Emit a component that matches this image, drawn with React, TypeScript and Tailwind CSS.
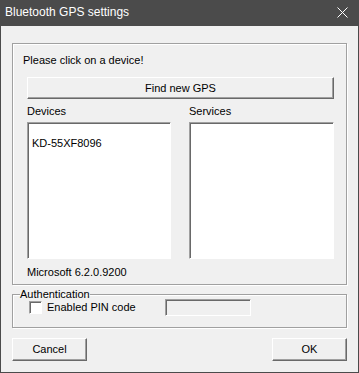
const raised =
  'border border-t-white border-l-white border-r-[#696969] border-b-[#696969] shadow-[inset_-1px_-1px_0_#a0a0a0] bg-[#f0f0f0]';
const sunken =
  'border border-t-[#a0a0a0] border-l-[#a0a0a0] border-r-white border-b-white shadow-[inset_1px_1px_0_#696969]';

export default function App() {
  return (
    <div className="w-[359px] h-[373px] flex flex-col bg-[#f0f0f0] border border-t-0 border-[#4b4b4b] text-[11px] leading-[13px] text-black font-['Liberation_Sans',Arial,sans-serif]">
      <div className="h-[26px] shrink-0 bg-[#4b4b4b] flex items-center justify-between pl-[4px] pr-[10px] text-white text-[12px]">
        <span className="pb-[1px]">Bluetooth GPS settings</span>
        <svg width="11" height="11" viewBox="0 0 11 11" className="mb-[1px]">
          <path d="M0.5 0.5 L10.5 10.5 M10.5 0.5 L0.5 10.5" stroke="#fff" strokeWidth="1" />
        </svg>
      </div>

      <div className="flex-1 flex flex-col px-[11px] pt-[17px]">
        <div className="h-[242px] border border-[#a0a0a0] shadow-[inset_1px_1px_0_#fff,1px_1px_0_#fff] flex flex-col pl-[10px] pr-[12px]">
          <p className="mt-[10px]">Please click on a device!</p>
          <button className={`${raised} ml-[4px] mt-[10px] h-[22px] flex items-center justify-center`}>
            Find new GPS
          </button>
          <div className="ml-[4px] mt-[6px] flex gap-[18px]">
            <div className="flex flex-col w-[144px]">
              <span>Devices</span>
              <div className={`${sunken} mt-[4px] h-[137px] bg-white px-[4px] pt-[14px]`}>KD-55XF8096</div>
            </div>
            <div className="flex flex-col flex-1">
              <span>Services</span>
              <div className={`${sunken} mt-[4px] h-[137px] bg-white`} />
            </div>
          </div>
          <p className="ml-[4px] mt-[7px]">Microsoft 6.2.0.9200</p>
        </div>

        <fieldset className="mt-[3px] h-[40px] border border-[#a0a0a0] shadow-[inset_1px_1px_0_#fff,1px_1px_0_#fff] pl-[7px] flex items-center">
          <legend className="px-0 leading-[13px]">Authentication</legend>
          <div className="flex items-center pl-[9px] -mt-[2px]">
            <span className={`${sunken} w-[13px] h-[13px] bg-white`} />
            <span className="ml-[5px]">Enabled PIN code</span>
            <span className={`${sunken} ml-[29px] w-[86px] h-[17px] bg-[#f0f0f0]`} />
          </div>
        </fieldset>

        <div className="mt-[10px] flex justify-between">
          <button className={`${raised} w-[75px] h-[23px]`}>Cancel</button>
          <button className={`${raised} w-[75px] h-[23px]`}>OK</button>
        </div>
      </div>
    </div>
  );
}
